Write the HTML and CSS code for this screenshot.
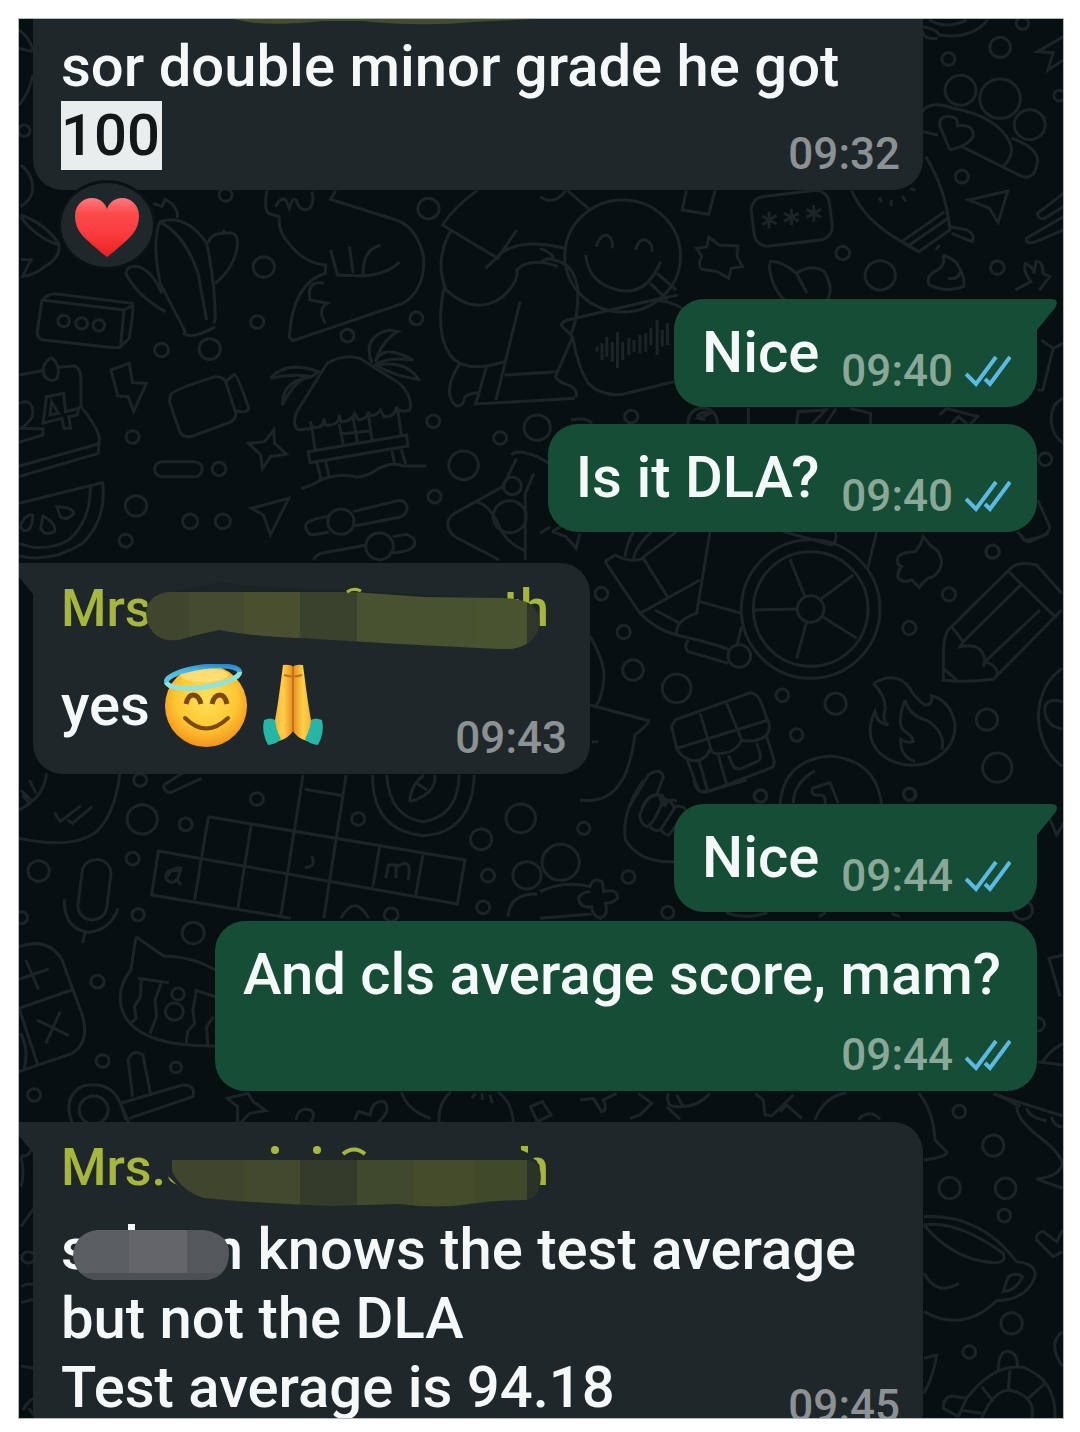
FILE: index.html
```html
<!DOCTYPE html>
<html lang="en">
<head>
<meta charset="utf-8">
<meta name="viewport" content="width=device-width, initial-scale=1">
<title>Chat</title>
<link rel="stylesheet" href="styles.css">
</head>
<body>
<svg class="defs" aria-hidden="true">
  <symbol id="ticks" viewBox="0 0 46 32">
    <path d="M1 19 L11 29 L31 2 M20 24 L25 29 L45 2" fill="none" stroke="#5cb9e2" stroke-width="4"/>
  </symbol>
  <symbol id="tail-out" viewBox="0 0 40 36">
    <path d="M0 0 H35 Q43 1 38 9 L20 31 V36 H0Z" fill="#154d37"/>
  </symbol>
  <symbol id="tail-in" viewBox="0 0 40 36">
    <path d="M40 0 H5 Q-3 1 2 9 L20 31 V36 H40Z" fill="#20272a"/>
  </symbol>
</svg>
<main class="chat">
  <svg class="wallpaper" viewBox="19 19 1044 1399" preserveAspectRatio="xMinYMin slice" aria-hidden="true">
    <g transform="scale(.3444 .3333)">
      <path d="M55 90 Q85 110 95 150 M55 145 L95 155 M95 225 Q85 280 55 315 M60 495 Q95 520 95 570 Q90 600 60 620 M60 645 Q130 670 170 730 Q180 770 130 800 Q100 825 65 830 L90 780 L60 778 M60 650 Q100 710 170 735"/>
      <circle cx="70" cy="392" r="17"/><circle cx="655" cy="585" r="19"/><circle cx="1244" cy="626" r="31"/><circle cx="766" cy="801" r="31"/>
      <path d="M445 610 L470 620 L480 598 Q520 620 515 655 M540 1000 L465 850 Q440 720 465 665 Q540 640 600 730 Q625 850 625 960 L620 970 M465 665 Q540 710 575 820 L600 960 M605 730 Q610 700 650 700 L650 690 M650 700 Q690 690 690 730 Q685 800 625 850 M365 820 Q370 795 400 800 Q440 810 470 880 M365 820 Q400 890 480 935 M530 1000 Q560 1020 625 980"/>
      <path d="M775 572 Q765 630 780 640 L810 650 Q810 700 835 725 Q880 790 945 795 L945 820 Q850 850 840 1010 L850 1022 L1170 910 Q1235 870 1230 770 Q1210 680 1150 660 L960 598 L975 572 M800 620 Q815 590 830 600 L840 625 Q850 590 860 600 Q870 640 900 625 Q915 600 905 575 M960 750 L980 825 L1055 828 Q1130 820 1160 785 M1015 740 L1025 820 M1055 828 Q1050 750 1105 735 M940 850 Q890 840 900 900 L950 910 Q920 930 945 970"/>
      <path d="M1385 572 Q1320 620 1285 675 L1445 775 L1500 690 M1310 690 Q1260 780 1295 870 Q1380 950 1460 890 Q1510 840 1500 810 Q1540 770 1620 800 M1410 805 L1445 770 Q1500 710 1640 745"/>
    </g>
    <g transform="translate(540 0) scale(.3444 .3333)">
      <path d="M1110 80 Q1150 85 1160 105 Q1250 120 1300 60 M1110 90 Q1110 120 1155 115 M1130 60 Q1180 90 1240 60"/>
      <circle cx="1401" cy="70" r="18"/><circle cx="1336" cy="142" r="30"/><circle cx="1186" cy="177" r="19"/><circle cx="1221" cy="271" r="45"/><circle cx="1336" cy="296" r="59"/><circle cx="1422" cy="374" r="45"/><circle cx="1508" cy="287" r="16"/><circle cx="1225" cy="530" r="19"/>
      <path d="M1520 110 L1445 155 L1490 158 L1475 210 L1520 180 M1110 335 Q1130 300 1200 325 Q1330 350 1365 430 Q1380 460 1345 500 M1110 395 L1155 405 M1225 440 L1400 530 Q1440 540 1445 480 Q1440 440 1370 415 M1190 450 L1160 375 Q1160 345 1190 350 Q1215 350 1212 378 Q1260 370 1258 410 Q1240 440 1190 450"/>
      <path d="M1245 600 L1358 573 L1330 668 L1305 625Z M1520 580 L1445 640 Q1445 660 1465 655 L1520 620 M1520 650 L1412 715 Q1410 735 1440 725 L1520 690 M905 572 Q940 660 1050 725 L1100 755 L1190 690 Q1180 570 1120 470 M1050 725 L1175 635 M1065 740 L1185 655 M1190 680 L1240 690 Q1265 705 1255 725 L1195 700 M1160 735 L1150 750"/>
      <path d="M985 592 L992 606 M1020 600 V618 M1052 588 L1062 604 M1075 565 L1090 572"/>
      <rect x="617" y="580" width="228" height="150" rx="40" transform="rotate(-7 730 655)"/>
      <path d="M665 635 V685 M645 648 L687 672 M687 646 L645 674 M730 627 V675 M709 640 L751 664 M751 640 L709 664 M795 615 V665 M774 628 L816 652 M816 628 L774 652"/>
      <circle cx="240" cy="768" r="168"/>
      <path d="M163 740 Q175 702 195 706 Q212 712 210 745 M278 750 Q285 716 308 720 Q328 730 325 755 M133 765 Q140 850 225 870 Q310 890 350 785 M340 820 L395 870 M320 850 L370 900 M80 572 L145 630 M0 590 Q40 620 75 572 M0 745 Q40 760 40 780 Q100 790 110 870 Q110 960 90 1000 M0 790 Q20 770 40 780 M425 572 L413 630 L490 643 L508 572"/>
      <path d="M490 712 L520 735 L575 738 L572 770 L588 800 L555 805 L548 835 L515 815 L470 808 Q455 795 470 770 L455 745 L485 740Z"/>
      <circle cx="879" cy="759" r="20"/><circle cx="988" cy="826" r="44"/><circle cx="1328" cy="803" r="20"/>
      <path d="M665 790 Q670 860 710 900 L800 930 Q870 890 825 815 Q790 790 745 820 Q700 780 665 785 M745 820 L775 880 M1170 765 Q1210 780 1215 800 Q1235 830 1230 860 Q1180 880 1130 855 Q1120 830 1145 815 Q1180 800 1170 765 M1185 835 Q1215 840 1220 815 M1380 870 L1425 845 Q1400 810 1410 790 Q1430 800 1435 820 L1440 785 Q1460 780 1460 820 L1480 830 L1450 870"/>
    </g>
    <g transform="translate(0 280) scale(.3444 .3333)">
      <path d="M122 60 L360 90 L350 200 Q340 205 320 202 L125 180 Q108 175 108 155 L122 60 Q145 38 165 42 L385 70 Q390 80 375 175 L350 200 M360 90 L388 75"/>
      <circle cx="185" cy="123" r="17"/><circle cx="237" cy="130" r="17"/><circle cx="287" cy="136" r="17"/><circle cx="469" cy="210" r="20"/><circle cx="609" cy="207" r="31"/><circle cx="747" cy="126" r="19"/><circle cx="1009" cy="167" r="19"/><circle cx="1209" cy="115" r="19"/><circle cx="385" cy="471" r="19"/><circle cx="636" cy="567" r="20"/><circle cx="395" cy="678" r="31"/><circle cx="552" cy="724" r="22"/><circle cx="647" cy="724" r="22"/><circle cx="365" cy="782" r="19"/><circle cx="1258" cy="424" r="19"/><circle cx="1452" cy="474" r="19"/><circle cx="1346" cy="556" r="43"/><circle cx="1262" cy="650" r="19"/><circle cx="1560" cy="443" r="38"/>
      <path d="M55 285 L122 272 M170 262 L215 258 Q235 262 235 300 L235 380 Q290 450 288 480 L285 520 L55 590 M55 558 L285 492 M150 232 Q180 262 165 295 Q150 310 130 290 Q115 255 150 232 M55 370 Q90 355 95 390 Q100 420 60 445 L125 447 L125 465 L55 487 M135 350 L185 340 L190 395 L228 385 L225 405 L200 410 L205 445 L185 445 L180 415 L125 430Z M150 365 L145 405 L170 400Z"/>
      <path d="M322 270 L375 250 L385 308 L425 310 L388 395 L372 350 L342 348Z M495 345 Q500 330 625 290 Q650 290 655 305 L685 400 Q685 420 665 428 L560 468 Q530 475 522 455 L492 365Z M655 305 L680 283 Q690 285 722 385 Q720 400 685 393"/>
      <path d="M795 450 L797 490 L832 522 L785 530 L762 567 L757 525 L722 490 L768 485Z M55 670 L298 608 Q310 720 240 790 Q150 850 55 828 M262 620 Q265 720 200 780 Q130 820 55 790 M60 735 Q75 700 95 705 Q95 750 75 752 Q60 752 60 735 M125 708 Q165 730 158 755 Q130 770 118 745Z M165 680 Q210 680 215 700 Q195 725 175 710Z"/>
      <rect x="449" y="545" width="138" height="45" rx="22"/>
      <path d="M730 685 L838 655 L785 765 L765 705Z M875 625 Q900 620 930 600 Q980 580 1030 590 Q1060 595 1100 565 Q1140 545 1170 558 L1238 558 M895 515 L1180 465 L1185 498 L900 548Z M920 548 L932 598 M945 542 L955 588 M1138 512 L1145 550 M1165 508 L1178 552 M905 440 L915 510 M985 432 L998 500 M1025 410 L1038 490 M1070 405 L1080 480 M1155 390 L1165 465 M990 462 L1080 452 M865 450 L905 445 Q905 430 900 425 L905 440 Q940 450 940 415 L945 435 Q985 440 985 405 L990 425 Q1020 425 1030 400 L1040 420 Q1070 415 1068 395 Q1080 420 1105 390 L1115 410 Q1150 410 1150 380 Q1160 400 1190 390 Q1200 350 1160 310 L1045 235 Q1000 220 950 250 L865 390 Q845 430 865 450"/>
      <path d="M785 295 Q830 240 925 275 L905 290 Q860 290 820 375 Q820 300 905 290 Q850 280 785 295 M1080 250 Q1050 170 1130 150 L1155 155 Q1110 180 1090 245 Q1110 190 1200 240 Q1120 230 1090 255 Q1180 240 1215 298 Q1150 290 1090 255"/>
      <path d="M955 757 L905 765 Q885 755 888 735 Q892 718 960 708 M1025 695 L1155 662 Q1180 660 1182 685 Q1180 705 1160 712 L1028 738"/>
      <circle cx="990" cy="725" r="38"/>
      <path d="M910 840 Q920 820 940 818 L1065 795 M1140 770 L1180 763 Q1215 775 1200 800 Q1190 815 1130 820"/><circle cx="1102" cy="799" r="40"/>
      <path d="M1335 250 Q1280 340 1325 378 Q1345 380 1350 350 Q1385 330 1390 345 L1380 372 L1670 355 M1290 20 Q1260 170 1315 235 Q1360 280 1465 245 M1412 262 L1382 370 M1510 65 L1440 360 M1465 285 L1620 275"/>
      <path d="M1485 525 Q1500 505 1560 530 L1610 560 M1500 535 L1460 620 L1320 700 Q1280 730 1320 770 L1450 840 M1550 580 L1525 640 V840 M1380 665 Q1420 670 1450 740 Q1470 790 1525 812"/><circle cx="1488" cy="618" r="26"/><circle cx="1480" cy="710" r="48"/>
    </g>
    <g transform="translate(540 280) scale(.3444 .3333)">
      <path d="M400 45 L320 62 L80 120 Q55 130 65 140 L95 170 Q110 260 140 310 Q180 350 240 343 L390 305 M95 170 L45 290 Q50 305 90 318 Q110 330 105 352 M320 62 Q380 60 420 90"/>
      <path d="M165 200 V215 M180 190 V240 M194 170 V230 M210 185 V245 M225 155 V265 M240 185 V240 M258 175 V225 M273 180 V215 M290 165 V220 M307 160 V215 M322 145 V195 M340 120 V225 M355 150 V200 M370 130 V195"/>
      <circle cx="265" cy="410" r="19"/><circle cx="1314" cy="815" r="19"/><circle cx="1467" cy="538" r="19"/>
      <path d="M430 432 Q430 385 475 383 Q515 390 515 432 M455 410 Q470 390 495 400 L460 415 L480 420 M605 385 V432 M745 432 L750 395 L830 390 L790 432 M830 432 L860 385 M900 385 L960 400 V432 M1160 405 L1180 385 L1270 410 L1250 432 M1195 432 L1215 410 L1240 432 M1520 355 Q1480 370 1485 430 Q1490 470 1520 490 M1445 330 L1460 330 L1490 205 L1455 180 M1490 205 L1520 190 M1445 660 L1480 740 Q1480 770 1410 780 L1385 755 M35 755 L60 740 M35 755 L75 770 L105 805 L115 760"/>
      <path d="M90 420 Q140 410 150 432 M0 760 L30 740"/>
    </g>
    <g transform="translate(580 530) scale(.3333)">
      <circle cx="692" cy="237" r="208"/><circle cx="692" cy="237" r="172"/><circle cx="692" cy="237" r="40"/>
      <path d="M675 200 L630 88 M722 208 L820 135 M728 260 L830 325 M680 275 L650 385 M650 237 L522 240 M135 80 Q140 40 160 5 M160 85 Q170 45 215 5 M185 85 L290 5 M75 95 L105 75 Q150 100 190 85 L265 205 M75 95 L180 250 Q230 300 290 315 Q285 270 350 250 L390 5 M180 250 L360 150 M225 240 L300 280 M360 215 L485 250 M290 315 Q400 340 450 360 M325 330 Q310 350 325 365 L445 400 M485 290 L470 350 M610 5 L755 45 Q775 30 765 5 M890 5 L862 120"/>
      <circle cx="478" cy="378" r="34"/><circle cx="64" cy="191" r="19"/><circle cx="131" cy="306" r="20"/><circle cx="159" cy="420" r="31"/><circle cx="290" cy="475" r="43"/><circle cx="607" cy="496" r="19"/><circle cx="767" cy="521" r="32"/><circle cx="650" cy="615" r="19"/><circle cx="1238" cy="65" r="20"/><circle cx="1107" cy="193" r="20"/><circle cx="988" cy="294" r="20"/><circle cx="1221" cy="569" r="32"/><circle cx="1252" cy="713" r="44"/><circle cx="988" cy="792" r="18"/><circle cx="542" cy="798" r="18"/>
      <path d="M1030 20 Q1020 50 1005 65 Q970 65 955 80 Q945 100 965 110 Q950 125 955 145 Q970 160 995 150 L1018 172 Q1040 140 1060 140 Q1085 120 1085 95 Q1080 60 1055 50Z M1320 10 Q1330 40 1355 33 L1405 10"/>
      <path d="M1285 122 L1115 290 Q1095 300 1090 360 L1090 450 Q1150 458 1240 448 L1445 240 M1285 122 Q1310 90 1370 105 L1445 190 M1285 122 Q1310 150 1325 162 L1150 335 L1115 290 M1325 162 L1430 265 M1380 240 L1215 395 Q1260 410 1250 440 M1150 335 L1140 350 Q1210 335 1215 395 L1210 410 M1090 415 L1130 450"/>
      <path d="M880 460 Q920 500 915 540 Q905 570 925 585 Q890 580 885 545 Q850 620 900 670 Q960 720 1040 700 Q1130 660 1125 580 Q1110 510 1055 498 Q1060 525 1035 525 Q1000 500 990 475 Q950 420 880 460 M975 510 Q950 580 970 600 Q1000 620 1000 635 Q980 640 962 628 Q960 680 1005 695 M975 510 Q990 560 1040 570 Q1100 610 1085 660 M1448 415 Q1380 460 1375 560 Q1380 660 1448 710 M1448 515 Q1390 500 1395 545 Q1400 590 1448 597"/>
      <path d="M285 570 L505 490 Q525 485 540 510 L565 575 Q575 600 555 620 Q520 640 485 630 Q470 665 430 670 Q400 675 390 660 Q370 700 330 690 Q300 680 290 655 L275 590Z M360 550 L395 665 M440 520 L485 630 M290 655 L565 570 M322 690 L355 780 Q365 790 385 785 L570 715 Q585 710 582 690 L560 620 M358 695 L382 780 M415 675 L440 765 M445 675 L460 710 Q470 720 485 715 L530 695 Q545 690 540 670 L530 640 M30 320 Q80 400 70 460 Q65 500 50 525 M30 525 L205 572 Q210 580 165 615 Q150 720 120 760 Q80 820 0 810 M35 635 H55"/>
      <path d="M600 825 Q610 690 750 678 Q890 690 905 825 M640 820 Q640 760 705 722 M735 822 Q740 795 720 795 Q690 800 698 775 L750 758 L775 820 M145 835 L205 735 Q240 710 250 740 L230 795 M185 835 Q205 790 245 795 Q255 800 250 830 M250 830 Q270 800 290 815"/>
    </g>
    <g transform="translate(0 770) scale(.3444 .3333)">
      <path d="M348 10 Q335 130 280 185 Q210 240 55 205 M135 10 Q130 80 55 120 M60 60 L90 90 M85 30 L105 70 M65 75 L85 100 M158 128 L175 155 L235 107 M195 150 L210 160 L268 110 M475 45 L530 10 M475 45 Q475 65 495 68 L585 25"/>
      <circle cx="407" cy="30" r="19"/><circle cx="413" cy="148" r="44"/><circle cx="539" cy="163" r="19"/><circle cx="746" cy="87" r="19"/><circle cx="1040" cy="147" r="19"/><circle cx="385" cy="266" r="19"/><circle cx="112" cy="303" r="31"/><circle cx="401" cy="434" r="18"/><circle cx="62" cy="443" r="18"/><circle cx="561" cy="489" r="32"/><circle cx="283" cy="635" r="19"/><circle cx="298" cy="873" r="19"/><circle cx="511" cy="892" r="16"/><circle cx="99" cy="975" r="19"/><circle cx="1397" cy="208" r="31"/><circle cx="1512" cy="145" r="43"/><circle cx="1417" cy="317" r="19"/><circle cx="1403" cy="412" r="19"/><circle cx="1530" cy="316" r="41"/><circle cx="1136" cy="434" r="20"/>
      <path d="M605 140 L1350 270 L1328 402 L460 243 L440 375 L845 445 M605 140 L565 390 M730 160 L690 418 M880 15 L815 440 M1005 15 L940 445 M885 58 L1000 78 M1102 232 L1082 352 M1228 255 L1207 375 M485 320 Q500 290 525 295 L515 330 L525 345 M520 305 Q480 290 482 325 Q500 350 515 325 M905 258 Q920 290 885 293 M1120 325 L1128 285 L1150 285 V325 M1150 290 L1175 280 Q1195 280 1185 330"/>
      <path d="M1082 15 Q1080 180 1228 197 Q1370 190 1377 15 M1123 15 Q1130 140 1228 155 Q1330 140 1333 15 M1190 95 Q1190 50 1230 15 M1190 95 Q1270 70 1262 15 M1210 40 L1240 60 M990 445 Q1030 370 1070 445 M1475 440 Q1480 370 1560 372"/>
      <rect x="232" y="268" width="84" height="182" rx="42" transform="rotate(7 274 360)"/>
      <path d="M187 388 Q185 480 260 487 Q320 480 343 415 M247 487 L240 520 M55 530 Q140 500 180 570 L230 710 Q270 810 210 850 L55 905 M55 715 L208 660 M55 715 L110 885 M60 790 Q85 840 70 895 M75 570 L112 658 M55 628 L142 597 M107 750 L200 797 M175 725 L133 820"/>
      <path d="M395 500 L475 558 Q560 560 625 600 M395 500 L380 600 Q340 650 352 710 Q380 830 625 828 M400 625 L490 638 M410 630 L408 680 L390 710 L395 745 L378 762 M468 640 L450 690 L455 740 L435 790 M565 660 L625 680 M570 665 L560 720 L565 760 L545 785 L540 820 M620 740 L600 770 L603 825"/><circle cx="517" cy="672" r="18"/><circle cx="506" cy="725" r="26"/>
      <path d="M385 980 L372 870 Q385 835 415 855 L437 972 M350 1000 L530 945 Q570 945 560 980 L375 1045 M350 1000 L375 1060 M210 1060 Q180 980 240 948 Q320 930 350 1000 L365 1050"/><circle cx="272" cy="1020" r="42"/>
      <path d="M660 985 L720 970 L735 995 L772 1022 L725 1030 L690 1068 L690 1010Z M860 1050 Q865 1010 900 1020 Q920 1030 900 1060 M1030 1050 L1040 1025 L1075 1035 Q1080 990 1115 995 Q1140 1020 1095 1060 M1165 965 Q1180 1020 1250 1045 M1310 965 Q1270 1000 1275 1060 M1445 965 Q1490 1000 1490 1060 M1370 985 L1380 970 M1400 990 V970 M1430 1000 L1422 975 M1540 1010 L1575 995 L1600 1035 L1560 1055Z"/>
    </g>
    <g transform="translate(540 780) scale(.3444 .3333)">
      <path d="M300 0 Q235 100 248 180 Q290 250 390 245 M445 0 Q455 40 480 35 L600 0 M290 105 Q310 40 340 45 Q365 55 345 90 Q330 130 310 140 Q290 130 290 105 M345 60 Q380 50 390 85 L350 150 Q330 155 320 140 M390 80 Q420 75 425 95 L375 165 Q360 165 352 150"/>
      <circle cx="127" cy="145" r="18"/><circle cx="60" cy="247" r="54"/><circle cx="257" cy="291" r="19"/><circle cx="371" cy="397" r="18"/><circle cx="640" cy="48" r="19"/><circle cx="1074" cy="43" r="18"/><circle cx="1402" cy="390" r="28"/><circle cx="1445" cy="733" r="20"/>
      <path d="M0 335 Q70 300 145 320 Q155 290 180 305 Q185 330 185 335 Q225 325 225 355 Q210 370 190 370 Q200 405 175 415 Q150 405 150 380 Q115 385 112 355 Q120 335 145 335 M0 415 L150 402 M1480 115 L1500 165 L1520 130 M1520 525 L1478 535 L1510 650 M1460 845 Q1480 810 1520 790 M1445 845 L1520 855 M1320 940 L1395 980 M540 398 Q600 420 660 398 M810 410 L830 398 M1020 400 L1045 410"/>
    </g>
    <g transform="translate(580 1080) scale(.3333)">
      <path d="M0 60 L40 55 L65 95 Q85 90 70 60 L110 40 M175 40 L215 70 L180 105 L150 115 M265 40 Q255 80 290 80 Q350 85 390 40 M260 80 L300 118 M290 45 L310 80 M525 40 L550 60 L555 105 L575 108 L640 45 M600 95 L620 75 L665 115 M705 120 Q730 50 800 38 M1015 38 Q1060 90 1065 180 L1100 215 Q1105 230 1032 240 M835 118 Q870 85 900 118 M1240 42 L1448 108 M1310 80 Q1310 120 1390 180 Q1440 220 1448 250 Q1440 290 1370 297 L1448 325 M1340 85 Q1350 115 1400 122 M1415 110 Q1420 140 1448 140"/>
      <circle cx="1138" cy="95" r="19"/><circle cx="1240" cy="197" r="32"/><circle cx="1109" cy="324" r="32"/><circle cx="1277" cy="325" r="31"/><circle cx="1273" cy="407" r="19"/><circle cx="1295" cy="730" r="32"/><circle cx="1168" cy="816" r="19"/>
      <path d="M1032 410 Q1200 400 1310 545 Q1370 550 1365 590 Q1340 660 1250 662 Q1150 760 1032 695 M1032 435 Q1130 420 1270 520 Q1280 550 1240 548 Q1120 540 1032 435 M1032 580 Q1070 650 1137 610 M1285 590 Q1310 575 1328 590 Q1310 630 1270 635Z M1448 450 L1430 485 L1390 455 Q1365 460 1370 480 L1420 530 L1448 515 M1032 835 L1070 825 Q1060 890 1032 940 M1255 870 Q1255 815 1285 813 Q1315 820 1312 862 M1135 1010 L1090 985 Q1090 950 1115 948 L1160 955 Q1240 850 1330 862 Q1430 900 1425 1015 M1205 1015 Q1240 930 1290 930 Q1370 950 1355 1015 M1160 955 L1135 1010 M1140 990 L1205 1000 M1205 920 L1240 965 M1290 870 L1285 930 M1395 910 L1345 955 M1448 755 Q1400 790 1448 860"/>
    </g>
    <g transform="translate(0 1100) scale(.3827 .3333)">
      <path d="M55 105 Q80 120 82 150 Q70 175 55 165 M55 170 Q65 220 55 260 M88 325 L55 380 M55 560 Q75 548 88 555 M55 608 L88 598 M55 798 L88 805 M60 930 Q75 900 88 895 M75 925 L88 945"/><circle cx="74" cy="472" r="17"/>
    </g>
  </svg>

  <article class="bubble incoming wide clipped has-reaction">
    <svg class="smear top-smear" viewBox="0 0 300 6" aria-hidden="true"><path d="M0 0 H300 L240 3 Q190 8 130 2 L90 2 Q45 7 15 3Z" fill="#454d31"/></svg>
    <p class="text">sor double minor grade he got <mark>100</mark></p>
    <div class="meta"><time>09:32</time></div>
    <button class="reaction" type="button" aria-label="Heart reaction">
      <svg class="heart" viewBox="0 0 64 60" aria-hidden="true">
        <defs><linearGradient id="hg" x1="0" y1="0" x2="0" y2="1"><stop offset="0" stop-color="#ff7b80"/><stop offset=".25" stop-color="#fb4b4d"/><stop offset=".65" stop-color="#fa393c"/><stop offset="1" stop-color="#e62222"/></linearGradient></defs>
        <path d="M32 59 Q29 57 21 50 C8 39 0 32 0 18 C0 7 8 0 17 0 C25 0 30 5 32 11 C34 5 39 0 47 0 C56 0 64 7 64 18 C64 32 56 39 43 50 Q35 57 32 59Z" fill="url(#hg)"/>
      </svg>
    </button>
  </article>

  <article class="bubble outgoing tailed">
    <svg class="tail" aria-hidden="true"><use href="#tail-out"/></svg>
    <p class="text">Nice</p>
    <div class="meta"><time>09:40</time><svg class="ticks" role="img" aria-label="Read"><use href="#ticks"/></svg></div>
  </article>

  <article class="bubble outgoing follow">
    <p class="text">Is it DLA?</p>
    <div class="meta"><time>09:40</time><svg class="ticks" role="img" aria-label="Read"><use href="#ticks"/></svg></div>
  </article>

  <article class="bubble incoming tailed narrow">
    <svg class="tail" aria-hidden="true"><use href="#tail-in"/></svg>
    <h2 class="sender"><span>Mrs</span><span>th</span>
      <svg class="smear" viewBox="62 578 484 70" aria-hidden="true">
        <path d="M148 598 Q180 589 220 581 Q260 587 340 589 L500 598 L500 620 L150 620Z" fill="#1c2325"/>
        <clipPath id="c1"><path d="M168 591 H355 L425 596 L505 597 Q527 598 534 605 Q545 620 538 632 Q528 650 500 648 L400 643 L300 637 Q250 635 220 629 Q200 633 180 639 Q155 642 148 620 Q143 596 168 591Z"/></clipPath>
        <g clip-path="url(#c1)">
          <path d="M140 570 H190 V660 H140Z" fill="#3f462d"/><path d="M190 570 H245 V660 H190Z" fill="#444b30"/><path d="M245 570 H301 V660 H245Z" fill="#4a502f"/><path d="M301 570 H358 V660 H301Z" fill="#3a412c"/><path d="M358 570 H476 V660 H358Z" fill="#485130"/><path d="M476 570 H528 V660 H476Z" fill="#4a532f"/><path d="M528 570 H560 V660 H528Z" fill="#30372a"/>
        </g>
        <path d="M348 591 Q355 586 362 590" fill="none" stroke="#a7b63c" stroke-width="3"/>
      </svg>
    </h2>
    <p class="text with-emoji">yes <svg class="emoji" viewBox="0 0 84 84" role="img" aria-label="Smiling face with halo">
        <defs>
          <radialGradient id="fg" cx=".5" cy=".4" r=".62"><stop offset="0" stop-color="#ffe05c"/><stop offset=".6" stop-color="#fdc832"/><stop offset="1" stop-color="#f48f1c"/></radialGradient>
          <linearGradient id="halo" x1="1" y1="0" x2="0" y2=".6"><stop offset="0" stop-color="#1b6fc8"/><stop offset=".5" stop-color="#45b4dc"/><stop offset="1" stop-color="#5cc4e4"/></linearGradient>
        </defs>
        <circle cx="42" cy="42" r="41" fill="url(#fg)"/>
        <ellipse cx="40" cy="11" rx="24" ry="7" fill="#ffe79a" opacity=".6"/>
        <g transform="rotate(-8 39 13)" fill="none" stroke-width="5">
          <path d="M2 13 A37 10 0 0 1 76 13" stroke="url(#halo)"/>
          <path d="M2 13 A37 10 0 0 0 76 13" stroke="#8fe3dc"/>
        </g>
        <path d="M22 40 Q24 31 29 31 Q35 31 37 40 M48 40 Q50 31 56 31 Q61 31 63 40" fill="none" stroke="#7a4a12" stroke-width="5"/>
        <path d="M21 54 Q42 75 64 54" fill="none" stroke="#7a4a12" stroke-width="4" stroke-linecap="round"/>
      </svg><svg class="emoji" viewBox="0 0 84 84" role="img" aria-label="Folded hands">
        <defs><linearGradient id="pg" x1="0" y1="0" x2="1" y2="0"><stop offset="0" stop-color="#f39c22"/><stop offset=".3" stop-color="#ffd04a"/><stop offset=".5" stop-color="#e88d20"/><stop offset=".7" stop-color="#ffd04a"/><stop offset="1" stop-color="#f39c22"/></linearGradient></defs>
        <path d="M42 3 Q40 0 32 1 L29 24 Q26 46 24 56 L17 66 L28 77 Q38 74 42 67 Q46 74 56 77 L67 66 L60 56 Q58 46 55 24 L52 1 Q44 0 42 3Z" fill="url(#pg)"/>
        <path d="M42 3 V67 M33 11 Q42 14 51 11" stroke="#c4701c" stroke-width="2" fill="none"/>
        <path d="M13 56 Q20 53 24 56 Q25 66 30 75 Q26 80 17 81 Q10 68 13 56Z" fill="#27b5a6"/><path d="M71 56 Q64 53 60 56 Q59 66 54 75 Q58 80 67 81 Q74 68 71 56Z" fill="#27b5a6"/>
      </svg></p>
    <div class="meta"><time>09:43</time></div>
  </article>

  <article class="bubble outgoing tailed">
    <svg class="tail" aria-hidden="true"><use href="#tail-out"/></svg>
    <p class="text">Nice</p>
    <div class="meta"><time>09:44</time><svg class="ticks" role="img" aria-label="Read"><use href="#ticks"/></svg></div>
  </article>

  <article class="bubble outgoing close stacked">
    <p class="text">And cls average score, mam?</p>
    <div class="meta"><time>09:44</time><svg class="ticks" role="img" aria-label="Read"><use href="#ticks"/></svg></div>
  </article>

  <article class="bubble incoming tailed wide">
    <svg class="tail" aria-hidden="true"><use href="#tail-in"/></svg>
    <h2 class="sender"><span>Mrs.S</span><span>h</span>
      <svg class="smear" viewBox="62 1137 484 70" aria-hidden="true">
        <path d="M172 1178 L163 1170 V1140 H210 V1160 H510 V1138 H532 V1156 L538 1160 Q542 1170 537 1190 L525 1199 L200 1190 Q186 1188 178 1184Z" fill="#20272a"/>
        <clipPath id="c2"><path d="M173 1159 H530 Q545 1163 541 1184 Q538 1199 525 1199 Q500 1199 470 1203 Q440 1208 400 1203 L330 1205 Q240 1201 205 1197 Q182 1190 173 1170Z"/></clipPath>
        <g clip-path="url(#c2)">
          <path d="M160 1150 H245 V1210 H160Z" fill="#3f462d"/><path d="M245 1150 H301 V1210 H245Z" fill="#43492c"/><path d="M301 1150 H358 V1210 H301Z" fill="#343b29"/><path d="M358 1150 H415 V1210 H358Z" fill="#40482e"/><path d="M415 1150 H476 V1210 H415Z" fill="#444c2b"/><path d="M476 1150 H528 V1210 H476Z" fill="#41492b"/><path d="M528 1150 H550 V1210 H528Z" fill="#2b3228"/>
        </g>
        <circle cx="276" cy="1149" r="4" fill="#a7b63c"/><circle cx="318" cy="1149" r="4" fill="#a7b63c"/>
        <path d="M344 1153 Q355 1144 366 1153" fill="none" stroke="#a7b63c" stroke-width="4"/>
        <path d="M522 1145 H529 V1152 L522 1149Z" fill="#a7b63c"/>
      </svg>
    </h2>
    <p class="text"><span class="hidden-name"><span>s</span><span>n</span><svg class="smear" viewBox="62 1214 180 69" aria-hidden="true">
        <clipPath id="c3"><path d="M98 1229 H205 Q231 1233 230 1254 Q228 1278 205 1279 H95 Q75 1274 74 1254 Q76 1232 98 1229Z"/></clipPath>
        <g clip-path="url(#c3)"><path d="M70 1220 H130 V1290 H70Z" fill="#5b5f62"/><path d="M130 1220 H188 V1290 H130Z" fill="#636568"/><path d="M188 1220 H235 V1290 H188Z" fill="#54585b"/><path d="M70 1272 H235 V1290 H70Z" fill="#4b5053"/></g>
        <path d="M129 1223 H136 V1229 H129Z" fill="#f5f8f8"/>
      </svg></span> knows the test average but not the DLA<br>Test average is 94.18</p>
    <div class="meta"><time>09:45</time></div>
  </article>
</main>
</body>
</html>
```

FILE: styles.css
```css
* {
  box-sizing: border-box;
}

body {
  margin: 0;
  padding: 18px 16px 13px 18px;
  background: #fff;
  font-family: Roboto, "Liberation Sans", sans-serif;
}

.defs {
  position: absolute;
  width: 0;
  height: 0;
}

.chat {
  position: relative;
  display: flex;
  flex-direction: column;
  align-items: flex-start;
  height: calc(100vh - 31px);
  padding: 0 26px 0 14px;
  overflow: hidden;
  border: 1px solid #b4baba;
  background: #080f10;
}

.wallpaper {
  position: absolute;
  inset: 0;
  width: 100%;
  height: 100%;
  fill: none;
  stroke: #1d2427;
  stroke-width: 3px;
}

.wallpaper * {
  vector-effect: non-scaling-stroke;
}

.bubble {
  position: relative;
  flex: none;
  max-width: 100%;
  border-radius: 30px;
}

.incoming {
  display: grid;
  margin-top: 31px;
  padding: 16px 23px 10px 28px;
  background: #20272a;
}

.incoming.tailed {
  border-top-left-radius: 0;
}

.wide {
  width: 890px;
}

.narrow {
  width: 557px;
}

.clipped {
  margin-top: 0;
  padding-top: 13px;
  border-radius: 0 0 30px 30px;
}

.has-reaction {
  margin-bottom: 79px;
}

.outgoing {
  display: flex;
  align-items: flex-end;
  align-self: flex-end;
  gap: 22px;
  margin-top: 30px;
  padding: 19px 26px 10px 28px;
  background: #154d37;
}

.outgoing.tailed {
  border-top-right-radius: 0;
}

.outgoing.follow {
  margin-top: 17px;
}

.outgoing.close {
  margin-top: 9px;
}

.outgoing.stacked {
  flex-direction: column;
  gap: 10px;
}

.stacked .text {
  padding-right: 10px;
}

.tail {
  position: absolute;
  top: 0;
  width: 40px;
  height: 36px;
}

.outgoing .tail {
  right: -20px;
}

.incoming .tail {
  left: -20px;
}

.text {
  grid-row: 2;
  grid-column: 1;
  margin: 0;
  padding-bottom: 10px;
  color: #f5f8f8;
  font-size: 58px;
  font-weight: 500;
  line-height: 69px;
}

.with-emoji {
  line-height: 98px;
}

.text mark {
  display: inline-block;
  padding-right: 2px;
  background: #e9edee;
  color: #12181a;
}

.sender {
  position: relative;
  grid-row: 1;
  grid-column: 1;
  display: flex;
  justify-content: space-between;
  width: 488px;
  margin: 0 0 17px;
  color: #a7b63c;
  font-size: 52px;
  font-weight: 500;
  line-height: 60px;
}

.smear {
  position: absolute;
  top: 0;
  left: 0;
  width: 484px;
  height: 70px;
}

.top-smear {
  left: 200px;
  width: 300px;
  height: 6px;
}

.hidden-name {
  position: relative;
  display: inline-flex;
  justify-content: space-between;
  width: 182px;
}

.hidden-name .smear {
  width: 180px;
  height: 69px;
}

.emoji {
  width: 84px;
  height: 84px;
  margin-right: 3px;
  vertical-align: -23px;
}

.meta {
  grid-row: 2;
  grid-column: 1;
  display: flex;
  align-items: center;
  align-self: end;
  justify-self: end;
  gap: 12px;
  color: #8c9194;
  font-size: 44px;
  font-weight: 500;
  line-height: 52px;
}

.outgoing .meta {
  color: #89a898;
}

.ticks {
  width: 46px;
  height: 32px;
}

.reaction {
  position: absolute;
  top: 161px;
  left: 25px;
  display: grid;
  place-items: center;
  width: 98px;
  height: 90px;
  padding: 6px 0 0;
  border: 3px solid #0b1213;
  border-radius: 50%;
  background: #20272a;
}

.heart {
  width: 64px;
  height: 60px;
}
```
